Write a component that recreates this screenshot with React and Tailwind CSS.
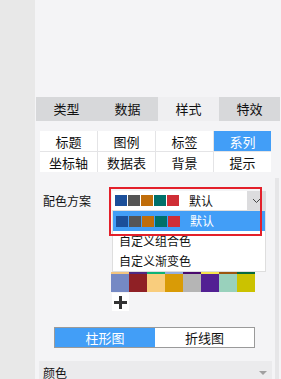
import React from 'react';

const tabs = ['类型', '数据', '样式', '特效'];
const subTabs = ['标题', '图例', '标签', '系列', '坐标轴', '数据表', '背景', '提示'];
const scheme = ['#1b4f9a', '#555555', '#c06d0a', '#00706a', '#cf2e36'];
const prevRow = ['#f3c57f', '#4e2a84', '#0fb376', '#94aede', '#4a0a6e', '#f5e34d', '#9c5610', '#07693e'];
const palette = ['#7589c4', '#8f2025', '#f9cd7d', '#d99b06', '#b5b5b5', '#522093', '#99d1bc', '#cbc200'];

function Swatches({ className }) {
  return (
    <div className={`flex gap-px ${className}`}>
      {scheme.map((c) => (
        <div key={c} className="w-[12px] h-[11px]" style={{ backgroundColor: c }} />
      ))}
    </div>
  );
}

export default function App() {
  return (
    <div className="flex w-[281px] h-[379px] overflow-hidden font-['Noto_Sans_CJK_SC',sans-serif] text-[#111]">
      <div className="w-[35px] shrink-0 bg-[#e8e8e8]" />
      <div className="relative flex-1 bg-[#f4f4f6] flex flex-col pt-[97px]">
        {/* main tabs */}
        <div className="mx-px flex h-[25px] text-[13px]">
          {tabs.map((t) => (
            <div key={t} className={`flex-1 flex items-center justify-center ${t === '样式' ? 'bg-[#efeff1]' : 'bg-[#d7d8da]'}`}>{t}</div>
          ))}
        </div>

        {/* sub tabs */}
        <div className="mt-[10px] ml-[5px] w-[231px] grid grid-cols-4 gap-px bg-[#e4e4e6] text-[13px]">
          {subTabs.map((t) => (
            <div key={t} className={`h-[20px] flex items-center justify-center ${t === '系列' ? 'bg-[#429ef7] text-white' : 'bg-white'}`}>{t}</div>
          ))}
        </div>

        {/* colour scheme row */}
        <div className="relative mt-[19px] ml-[8px] flex items-center h-[19px] text-[12px]">
          <div className="w-[69px]">配色方案</div>
          <div className="w-[154px] h-[19px] flex bg-white">
            <div className="flex-1 flex items-center pl-[3px]">
              <Swatches />
              <span className="ml-[10px] leading-none">默认</span>
            </div>
            <div className="w-[19px] bg-[#dcdcde] flex items-center justify-center">
              <svg width="9" height="6" viewBox="0 0 9 6" fill="none" stroke="#444" strokeWidth="1">
                <path d="M1 1l3.5 3.5L8 1" />
              </svg>
            </div>
          </div>

          {/* dropdown menu */}
          <div className="absolute left-[69px] top-[19px] w-[154px] h-[62px] bg-white border border-[#dedede] z-10">
            <div className="h-[20px] bg-[#429ef7] flex items-center pl-[3px] text-white">
              <Swatches />
              <span className="ml-[10px] leading-none">默认</span>
            </div>
            <div className="h-[20px] flex items-center pl-[6px]">自定义组合色</div>
            <div className="h-[20px] flex items-center pl-[6px]">自定义渐变色</div>
          </div>

          {/* highlight box */}
          <div className="absolute left-[66px] -top-[4px] w-[153px] h-[49px] border-2 border-[#e3202a] z-20 pointer-events-none" />
        </div>

        {/* palette */}
        <div className="mt-[62px] ml-[76px] w-[144px] flex flex-col">
          <div className="flex h-[2px]">
            {prevRow.map((c, i) => (
              <div key={i} className="flex-1" style={{ backgroundColor: c }} />
            ))}
          </div>
          <div className="flex h-[18px]">
            {palette.map((c, i) => (
              <div key={i} className="flex-1" style={{ backgroundColor: c }} />
            ))}
          </div>
        </div>

        {/* add */}
        <div className="mt-px ml-[77px] w-[17px] h-[18px] bg-white flex items-center justify-center">
          <svg width="15" height="15" viewBox="0 0 15 15" fill="#333">
            <rect x="6" y="1" width="3" height="13" />
            <rect x="1" y="6" width="13" height="3" />
          </svg>
        </div>

        {/* chart type toggle */}
        <div className="mt-[16px] ml-[19px] w-[201px] h-[21px] flex border border-[#9a9a9a] text-[13px]">
          <div className="w-[100px] bg-[#429ef7] text-white flex items-center justify-center">柱形图</div>
          <div className="flex-1 bg-white flex items-center justify-center">折线图</div>
        </div>

        {/* colour section */}
        <div className="mt-[13px] ml-[4px] w-[233px] flex-1 bg-[#ebebed] flex items-start justify-between pl-[4px] pr-[5px] pt-[6px] text-[12px]">
          <span className="leading-none">颜色</span>
          <svg width="8" height="4" viewBox="0 0 8 4" fill="#a0a0a0" className="mt-[4px]">
            <path d="M0 0h8L4 4z" />
          </svg>
        </div>

        {/* scrollbar */}
        <div className="absolute right-[2px] top-[178px] bottom-0 w-[4px] bg-[#e6e6e8]" />
      </div>
    </div>
  );
}
